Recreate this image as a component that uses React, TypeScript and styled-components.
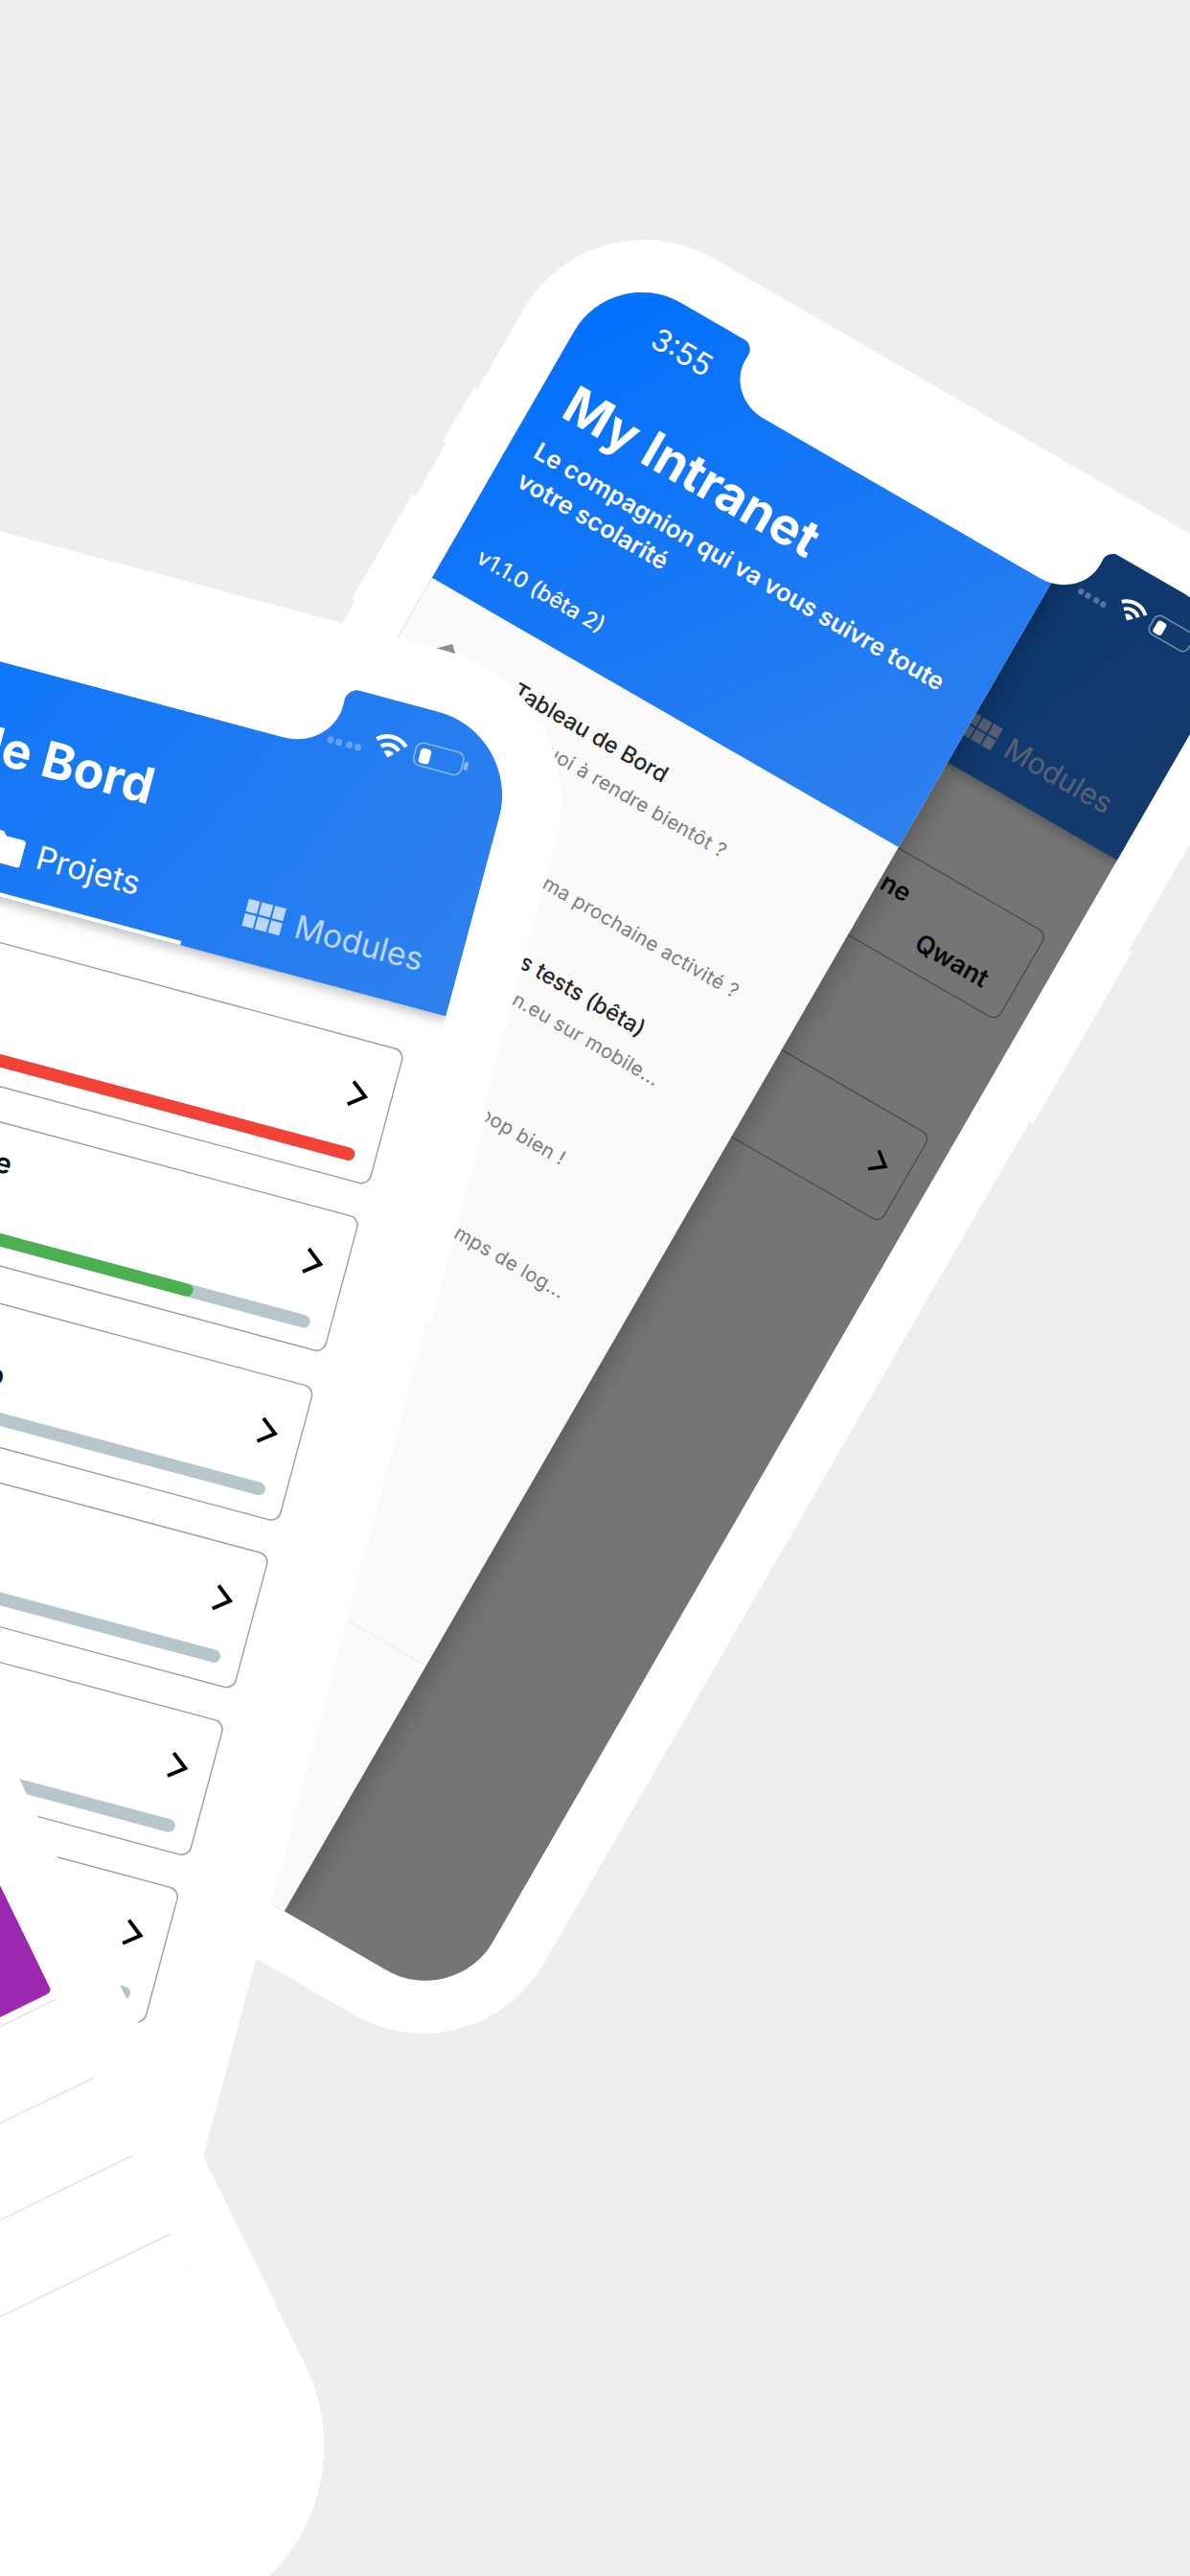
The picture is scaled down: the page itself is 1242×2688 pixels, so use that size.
import React from 'react';
import styled, { createGlobalStyle } from 'styled-components';

const GlobalStyle = createGlobalStyle`
  html, body {
    margin: 0;
    padding: 0;
    background: #eeeeee;
    font-family: Inter, 'Liberation Sans', sans-serif;
  }
`;

const Canvas = styled.div`
  position: relative;
  width: 1242px;
  height: 2688px;
  overflow: hidden;
  background: #eeeeee;
`;

// phones sit freely on the canvas, each one rotated and scaled around its top left corner
const Phone = styled.div<{ $left: number; $top: number; $angle: number; $scale: number }>`
  position: absolute;
  left: ${(p) => p.$left}px;
  top: ${(p) => p.$top}px;
  width: 431px;
  height: 868px;
  box-sizing: border-box;
  padding: 28px;
  border-radius: 71px;
  background: #fff;
  transform-origin: 0 0;
  transform: rotate(${(p) => p.$angle}deg) scale(${(p) => p.$scale});
`;

const SideButton = styled.div<{ $side: 'left' | 'right'; $top: number; $height: number }>`
  position: absolute;
  ${(p) => p.$side}: -2px;
  top: ${(p) => p.$top + 28}px;
  width: 4px;
  height: ${(p) => p.$height}px;
  background: #fff;
`;

const Screen = styled.div`
  position: relative;
  width: 375px;
  height: 812px;
  overflow: hidden;
  border-radius: 40px;
  background: #fff;
`;

const BackScreen = styled(Screen)`
  margin-left: 3px;
`;

// drawn on the phone and not in the screen so it also hides the clipped top edge of the header
const NotchShape = styled.svg`
  position: absolute;
  left: 28px;
  top: 25px;
  width: 375px;
  height: 34px;
  z-index: 5;
`;

const Overlay = styled.div`
  position: absolute;
  inset: 0;
  background: rgba(0, 0, 0, 0.54);
  z-index: 3;
`;

const Header = styled.header`
  position: relative;
  z-index: 2;
  display: flex;
  flex-direction: column;
  box-sizing: border-box;
  height: 135px;
  padding-top: 50px;
  background: linear-gradient(115deg, #0072ff, #2f80ed);
  box-shadow: 0 2px 5px rgba(0, 0, 0, 0.25);
`;

const Title = styled.h1`
  margin: 0 0 0 36px;
  font-size: 23px;
  line-height: 36px;
  font-weight: 700;
  color: #fff;
`;

const Tabs = styled.nav`
  display: grid;
  grid-template-columns: 124px 124px 127px;
  margin-top: auto;
`;

const Tab = styled.div<{ $active?: boolean; $inset?: number }>`
  display: flex;
  align-items: center;
  justify-content: center;
  gap: 6px;
  box-sizing: border-box;
  height: 44px;
  padding-left: ${(p) => p.$inset ?? 0}px;
  font-size: 15px;
  color: ${(p) => (p.$active ? '#fff' : 'rgba(255, 255, 255, 0.7)')};
  border-bottom: 2.5px solid ${(p) => (p.$active ? '#fff' : 'transparent')};
`;

// the status bar stays above the dimming layer
const StatusIcons = styled.div`
  position: absolute;
  top: 15px;
  right: 21px;
  z-index: 5;
  display: flex;
  align-items: center;
  height: 12px;
`;

const Dots = styled.div`
  display: flex;
  gap: 1.5px;
  margin-right: 5px;
  margin-top: 8px;
`;

const Dot = styled.span`
  width: 3px;
  height: 3px;
  border-radius: 1px;
  background: rgba(255, 255, 255, 0.3);
`;

const Battery = styled.div`
  position: relative;
  width: 22px;
  height: 10px;
  margin-left: 4px;
  margin-right: 2px;
  border-radius: 3px;
  box-shadow: 0 0 0 0.7px rgba(255, 255, 255, 0.45);

  &::before {
    content: '';
    position: absolute;
    left: 1.5px;
    top: 1.5px;
    width: 5px;
    height: 7px;
    border-radius: 1.5px;
    background: #fff;
  }

  &::after {
    content: '';
    position: absolute;
    right: -2.5px;
    top: 3px;
    width: 1.2px;
    height: 4px;
    border-radius: 1px;
    background: rgba(255, 255, 255, 0.45);
  }
`;

const Cards = styled.main<{ $top: number; $gap: number; $side: number }>`
  display: flex;
  flex-direction: column;
  gap: ${(p) => p.$gap}px;
  padding: ${(p) => p.$top}px ${(p) => p.$side}px 0;
`;

const Card = styled.article<{ $height: number }>`
  display: flex;
  flex-direction: column;
  box-sizing: border-box;
  height: ${(p) => p.$height}px;
  padding: 10px 10px 9.5px;
  border-radius: 5px;
  box-shadow: inset 0 0 0 0.7px #a0a0a0;
`;

const CardRow = styled.div`
  display: flex;
  justify-content: space-between;
  align-items: flex-start;
  flex: 1;
`;

const CardTitle = styled.div<{ $width: number }>`
  width: ${(p) => p.$width}px;
  margin-top: 1px;
  font-size: 13px;
  line-height: 14px;
  font-weight: 600;
  color: #111;
  text-align: right;
  white-space: nowrap;
`;

const Chevron = styled.svg`
  flex: none;
  width: 9px;
  height: 13px;
  margin-top: 9px;
  margin-right: 1px;
  margin-left: auto;
`;

const Track = styled.div`
  height: 6px;
  border-radius: 3px;
  background: #b6c6cc;
  overflow: hidden;
`;

const Fill = styled.div<{ $value: number; $color: string }>`
  width: ${(p) => p.$value}%;
  height: 100%;
  border-radius: 3px;
  background: ${(p) => p.$color};
`;

const CardValue = styled.div`
  margin-top: 4px;
  padding-right: 5px;
  text-align: right;
  font-size: 13px;
  line-height: 15px;
  font-weight: 600;
  color: #111;
`;

const Drawer = styled.aside`
  position: absolute;
  left: 0;
  top: 0;
  bottom: 0;
  z-index: 4;
  display: flex;
  flex-direction: column;
  width: 275px;
  background: #fafafa;
  box-shadow: 0 0 16px rgba(0, 0, 0, 0.35);
`;

const DrawerHeader = styled.header`
  position: relative;
  box-sizing: border-box;
  height: 185px;
  padding: 56px 15px 0;
  background: linear-gradient(125deg, #0070ff, #2f80ed);
  color: #fff;
`;

const Clock = styled.div`
  position: absolute;
  left: 0;
  top: 12.6px;
  width: 106px;
  text-align: center;
  font-size: 15.5px;
  line-height: 18px;
`;

const AppName = styled.h1`
  margin: 0;
  font-size: 26px;
  line-height: 32px;
  font-weight: 700;
`;

const Tagline = styled.p`
  margin: 5px 0 0 -1.7px;
  width: 255px;
  font-size: 12.5px;
  line-height: 17px;
  font-weight: 600;
`;

const Version = styled.div`
  margin-top: 29px;
  font-size: 11.2px;
  line-height: 14px;
  font-weight: 500;
`;

const MenuList = styled.ul`
  margin: 0;
  padding: 20px 0 0;
  list-style: none;
`;

const MenuItem = styled.li`
  display: flex;
  height: 59px;
  padding-left: 15px;
  gap: 26px;
`;

const MenuIcon = styled.div`
  flex: none;
  width: 24px;
  height: 24px;
  margin-top: 4px;
  margin-left: -1px;
  margin-right: 1px;
`;

const MenuTitle = styled.div`
  font-size: 11.5px;
  line-height: 17px;
  font-weight: 500;
  color: rgba(0, 0, 0, 0.87);
  white-space: nowrap;
`;

const MenuSub = styled.div`
  margin-top: 2px;
  font-size: 10px;
  line-height: 15px;
  letter-spacing: 0.2px;
  color: #7d7d7d;
  white-space: nowrap;
`;

const DrawerFooter = styled.div`
  margin-top: auto;
  height: 145px;
  box-shadow: inset 0 0.5px 0 #e6e6e6;
`;

const Spacer = styled.div<{ $height: number }>`
  height: ${(p) => p.$height}px;
`;

const Purple = styled.div`
  height: 200px;
  border-radius: 2px;
  background: #9c27b0;
`;

const Rule = styled.div`
  height: 34.3px;
  box-shadow: inset 0 0.5px 0 #dcdcdc;
`;

const Notch = () => (
  <NotchShape viewBox="0 -3 375 34">
    <path
      fill="#fff"
      d="M74 -3 L76 -0.5 C81 0 83.5 3 83 7 C82 20 93 30 106 30 L269 30 C282 30 293 20 292 7 C291.5 3 294 0 299 -0.5 L301 -3 Z"
    />
  </NotchShape>
);

const Wifi = () => (
  <svg width="16" height="12" viewBox="0 0 16 12" fill="none" stroke="#fff" strokeWidth="1.9">
    <path d="M1 4.6 A10 10 0 0 1 15 4.6" />
    <path d="M3.8 7.3 A6 6 0 0 1 12.2 7.3" />
    <path fill="#fff" stroke="none" d="M8 11.6 L5.6 9.2 A3.4 3.4 0 0 1 10.4 9.2 Z" />
  </svg>
);

const Folder = () => (
  <svg width="18" height="15" viewBox="0 0 18 15" fill="currentColor">
    <path d="M1.6 0 H6.6 L8.4 2 H16.4 A1.6 1.6 0 0 1 18 3.6 V13.4 A1.6 1.6 0 0 1 16.4 15 H1.6 A1.6 1.6 0 0 1 0 13.4 V1.6 A1.6 1.6 0 0 1 1.6 0 Z" />
  </svg>
);

const Grid = () => (
  <svg width="18" height="13" viewBox="0 0 18 13" fill="currentColor">
    <rect x="0" y="0" width="5.4" height="6" />
    <rect x="6.3" y="0" width="5.4" height="6" />
    <rect x="12.6" y="0" width="5.4" height="6" />
    <rect x="0" y="7" width="5.4" height="6" />
    <rect x="6.3" y="7" width="5.4" height="6" />
    <rect x="12.6" y="7" width="5.4" height="6" />
  </svg>
);

const Arrow = () => (
  <Chevron viewBox="0 0 9 13" fill="none" stroke="#000" strokeWidth="1.7">
    <polyline points="0.6,1 7.6,6.5 0.6,12" />
  </Chevron>
);

const Home = () => (
  <svg width="24" height="24" viewBox="0 0 24 24" fill="#8c8c8c">
    <path d="M12 0 L24 12 H20 V24 H14 V16 H10 V24 H4 V12 H0 Z" />
  </svg>
);

function StatusBar() {
  return (
    <StatusIcons>
      <Dots>
        <Dot />
        <Dot />
        <Dot />
        <Dot />
      </Dots>
      <Wifi />
      <Battery />
    </StatusIcons>
  );
}

function TopBar() {
  return (
    <Header>
      <Title>Tableau de Bord</Title>
      <Tabs>
        <Tab />
        <Tab $active>
          <Folder />
          Projets
        </Tab>
        <Tab $inset={8}>
          <Grid />
          Modules
        </Tab>
      </Tabs>
    </Header>
  );
}

const projects = [
  { title: '', value: 100, color: '#f44336' },
  { title: 're', width: 175, value: 83, color: '#4caf50' },
  { title: 'o', width: 197, value: 0, color: '#4caf50', spaced: true },
  { title: '', value: 0, color: '#4caf50' },
  { title: '', value: 0, color: '#4caf50' },
  { title: '', value: 0, color: '#4caf50' },
];

const menu = [
  { title: 'Tableau de Bord', sub: "T'as quoi à rendre bientôt ?" },
  { title: 'Planning', sub: "C'est quand ma prochaine activité ?" },
  { title: 'Découvrez les tests (bêta)', sub: 'Essaye my-intran.eu sur mobile...' },
  { title: 'Avis', sub: "Cette appli, c'est troop bien !" },
  { title: 'Logtime', sub: 'Pour consulter votre temps de log...' },
];

function App() {
  return (
    <Canvas>
      <GlobalStyle />

      <Phone $left={619} $top={197} $angle={30} $scale={2.045}>
        <SideButton $side="left" $top={90} $height={32} />
        <SideButton $side="left" $top={153} $height={62} />
        <SideButton $side="right" $top={172} $height={101} />
        <Screen>
          <TopBar />
          <Cards $top={50} $gap={67} $side={12}>
            <Card $height={52}>
              <CardTitle $width={270}>ne</CardTitle>
              <CardValue>Qwant</CardValue>
            </Card>
            <Card $height={52}>
              <CardRow>
                <Arrow />
              </CardRow>
            </Card>
          </Cards>
          <Overlay />
          <StatusBar />
          <Drawer>
            <DrawerHeader>
              <Clock>3:55</Clock>
              <AppName>My Intranet</AppName>
              <Tagline>Le compagnion qui va vous suivre toute votre scolarité</Tagline>
              <Version>v1.1.0 (bêta 2)</Version>
            </DrawerHeader>
            <MenuList>
              {menu.map((item, i) => (
                <MenuItem key={item.title}>
                  <MenuIcon>{i === 0 && <Home />}</MenuIcon>
                  <div>
                    <MenuTitle>{item.title}</MenuTitle>
                    <MenuSub>{item.sub}</MenuSub>
                  </div>
                </MenuItem>
              ))}
            </MenuList>
            <DrawerFooter />
          </Drawer>
        </Screen>
        <Notch />
      </Phone>

      <Phone $left={-319} $top={469} $angle={15} $scale={2.26}>
        <SideButton $side="right" $top={172} $height={101} />
        <Screen>
          <TopBar />
          <StatusBar />
          <Cards $top={20} $gap={15.3} $side={14}>
            {projects.map((project, i) => (
              <Card key={i} $height={65}>
                <CardRow>
                  {project.width && <CardTitle $width={project.width}>{project.spaced && <br />}{project.title}</CardTitle>}
                  <Arrow />
                </CardRow>
                <Track>
                  <Fill $value={project.value} $color={project.color} />
                </Track>
              </Card>
            ))}
          </Cards>
        </Screen>
        <Notch />
      </Phone>

      <Phone $left={-1648} $top={1061} $angle={-26} $scale={2.67}>
        <BackScreen>
          <Spacer $height={394} />
          <Purple />
          <Spacer $height={2.5} />
          <Rule />
          <Rule />
          <Rule />
          <Rule />
        </BackScreen>
      </Phone>
    </Canvas>
  );
}

export default App;
